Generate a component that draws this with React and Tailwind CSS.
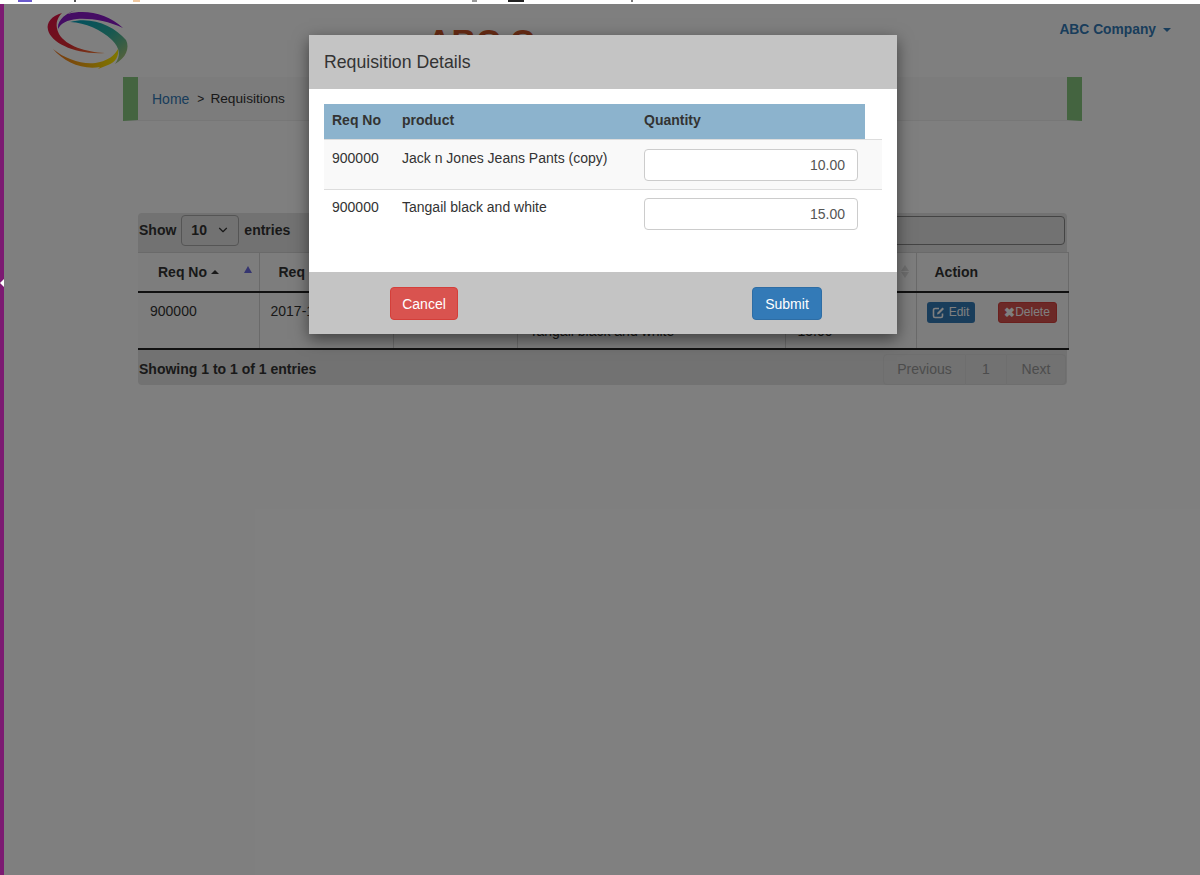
import React from 'react';
import { ChevronDown } from 'lucide-react';

const font = { fontFamily: '"Liberation Sans", Arial, sans-serif' };

// swirl logo behind the overlay
const Logo = () => (
  <svg width="84" height="60" viewBox="0 0 84 60" className="ml-[42px] mt-[6px] shrink-0">
    <defs>
      <linearGradient id="swirlRed" x1="0" y1="0" x2="1" y2="1">
        <stop offset="0" stopColor="#e0104a" />
        <stop offset="0.6" stopColor="#e02a30" />
        <stop offset="1" stopColor="#ff8a30" />
      </linearGradient>
      <linearGradient id="swirlBlue" x1="0" y1="0" x2="1" y2="1">
        <stop offset="0" stopColor="#00a0c0" />
        <stop offset="0.5" stopColor="#30b0a0" />
        <stop offset="1" stopColor="#c0c870" />
      </linearGradient>
      <linearGradient id="swirlYellow" x1="0" y1="0" x2="1" y2="0">
        <stop offset="0" stopColor="#f07020" />
        <stop offset="1" stopColor="#fff000" />
      </linearGradient>
    </defs>
    <path d="M16 3 C6 6 0 12 2 20 C5 33 30 45 59 43 C40 42 20 36 13 24 C9 16 10 9 16 3 Z" fill="url(#swirlRed)" />
    <path d="M12 19 C11 10 20 3 30 0 C25 2 23 3 22 4 C40 -1 62 4 77 18 C62 11 45 8 31 9 C21 10 15 13 12 19 Z" fill="#8a1ac8" />
    <path d="M24 12 C46 6 68 16 80 30 C84 38 80 48 69 54 C75 46 74 38 66 30 C54 19 40 13 24 12 Z" fill="url(#swirlBlue)" />
    <path d="M7 39 C20 50 40 56 54 52 C62 50 68 46 72 39 C73 46 70 52 62 55 L52 59 L54 57 C36 60 18 52 7 39 Z" fill="url(#swirlYellow)" />
  </svg>
);

const thCell = 'border-r border-[#d4d4d4] px-[19px] text-left align-middle text-sm font-bold text-[#333]';
const tdCell = 'border-r border-[#d4d4d4] px-3 pt-2 align-top text-sm text-[#333]';

const BackgroundPage = () => (
  <div className="flex h-full flex-col bg-white pl-1 pt-1">
    <div className="flex h-[73px] shrink-0 items-start">
      <Logo />
      <div className="ml-[297px] mt-5 text-[34px] font-bold leading-[34px] text-[#d0582a]">ABC Company</div>
      <div className="ml-auto mr-[29px] mt-4 flex items-center gap-[7px] text-[13.8px] font-bold text-[#337ab7]">
        ABC Company
        <span className="h-0 w-0 border-x-4 border-t-4 border-x-transparent border-t-[#337ab7]" />
      </div>
    </div>

    <div className="ml-[119px] flex h-[44px] w-[959px] shrink-0 items-center border-x-[15px] border-x-[#88c880] border-b border-b-[#eee] bg-[#f8f8f8] pl-[14px] text-sm text-[#333]">
      <span className="text-[#337ab7]">Home</span>
      <span className="ml-2 mr-[6px] text-xs">&gt;</span>
      <span className="mt-px text-[13.7px]">Requisitions</span>
    </div>

    <div className="ml-[134px] mt-[92px] w-[929px] rounded bg-[#e4e4e4]">
      <div className="flex h-[39px] items-center pb-[5px] text-sm font-bold text-[#333]">
        <span className="ml-px">Show</span>
        <div className="ml-[5px] flex h-[31px] w-[58px] items-center justify-between rounded border border-[#aaa] pl-[9px] pr-2">
          10
          <ChevronDown size={14} />
        </div>
        <span className="ml-[5px]">entries</span>
        <div className="ml-auto mr-[2px] h-[29px] w-[500px] rounded border border-[#888] bg-[#e4e4e4]" />
      </div>

      <table className="w-[930px] table-fixed border-collapse border-r border-t border-[#d4d4d4] bg-[#fafafa]">
        <colgroup>
          <col className="w-[121px]" />
          <col className="w-[134px]" />
          <col className="w-[124px]" />
          <col className="w-[268px]" />
          <col className="w-[131px]" />
          <col className="w-[152px]" />
        </colgroup>
        <thead>
          <tr className="h-[39px] border-b-2 border-[#222]">
            <th className={thCell}>
              <div className="flex items-center justify-between pl-px">
                <span className="flex items-center gap-1">
                  Req No
                  <span className="h-0 w-0 border-x-[4px] border-b-[4px] border-x-transparent border-b-[#333]" />
                </span>
                <span className="-mr-[12px] -mt-1 h-0 w-0 border-x-[4px] border-b-[7px] border-x-transparent border-b-[#6a6ae0]" />
              </div>
            </th>
            <th className={thCell}>Req Date</th>
            <th className={thCell}>Req By</th>
            <th className={thCell}>Product</th>
            <th className={thCell}>
              <div className="flex items-center justify-between">
                Quantity
                <span className="-mr-[12px] flex flex-col gap-px">
                  <span className="h-0 w-0 border-x-[4px] border-b-[6px] border-x-transparent border-b-[#dcdcdc]" />
                  <span className="h-0 w-0 border-x-[4px] border-t-[6px] border-x-transparent border-t-[#dcdcdc]" />
                </span>
              </div>
            </th>
            <th className="px-[18px] text-left text-sm font-bold text-[#333]">Action</th>
          </tr>
        </thead>
        <tbody>
          <tr className="h-[57px] border-b-2 border-[#222]">
            <td className={tdCell}>900000</td>
            <td className="border-r border-[#d4d4d4] px-[11px] pt-2 align-top text-sm text-[#333]">2017-10-10</td>
            <td className={tdCell} />
            <td className={tdCell}>
              <div>Jack n Jones Jeans Pants (copy)</div>
              <div>Tangail black and white</div>
            </td>
            <td className={tdCell}>
              <div className="h-5" />
              <div>15.00</div>
            </td>
            <td className="pl-[10px] pt-[9px] align-top">
              <div className="flex items-center justify-between pr-[11px]">
                <span className="flex h-[21px] w-[48px] items-center justify-center gap-1 rounded-[3px] bg-[#337ab7] text-xs text-white">
                  <svg width="13" height="13" viewBox="0 0 13 13" fill="none" stroke="white" strokeWidth="1.6">
                    <path d="M10.5 7.5 V10 a1.5 1.5 0 0 1 -1.5 1.5 H3 A1.5 1.5 0 0 1 1.5 10 V4 A1.5 1.5 0 0 1 3 2.5 H7" />
                    <path d="M5 8.5 L5.5 6.5 L10.5 1.5 L12 3 L7 8 Z" fill="white" stroke="none" />
                  </svg>
                  Edit
                </span>
                <span className="flex h-[21px] w-[59px] items-center justify-center rounded-[3px] border border-[#d43f3a] bg-[#d9534f] text-xs text-white">
                  <span className="text-[13px] font-bold leading-none">✖</span>
                  Delete
                </span>
              </div>
            </td>
          </tr>
        </tbody>
      </table>

      <div className="flex h-[35px] items-center justify-between text-sm font-bold text-[#333]">
        <span className="ml-px mt-1">Showing 1 to 1 of 1 entries</span>
        <div className="mr-px flex h-[31px] self-end font-normal text-[#999]">
          <span className="flex w-[83px] items-center justify-center rounded-l border border-[#dcdcdc]">Previous</span>
          <span className="flex w-[40px] items-center justify-center border-y border-[#dcdcdc]">1</span>
          <span className="flex w-[60px] items-center justify-center rounded-r border border-[#dcdcdc]">Next</span>
        </div>
      </div>
    </div>
  </div>
);

const rows = [
  { no: '900000', name: 'Jack n Jones Jeans Pants (copy)', qty: '10.00' },
  { no: '900000', name: 'Tangail black and white', qty: '15.00' },
];

const Modal = () => (
  <div className="absolute left-[309px] top-[35px] flex h-[299px] w-[588px] flex-col bg-white shadow-[0_5px_15px_rgba(0,0,0,0.5)]">
    <div className="flex h-[54px] shrink-0 items-center bg-[#c4c4c4] px-[15px] text-[17.7px] text-[#333]">Requisition Details</div>

    <div className="flex-1 px-[15px] pt-[15px] text-sm text-[#333]">
      <div className="flex h-[35px] w-[541px] items-center bg-[#8cb3cd] pb-[3px] font-bold">
        <span className="w-[70px] pl-2">Req No</span>
        <span className="w-[242px] pl-2">product</span>
        <span className="pl-2">Quantity</span>
      </div>
      {rows.map((row, i) => (
        <div
          key={row.name}
          className={`flex h-[50px] w-[558px] items-start border-t border-[#ddd] ${i === 0 ? 'bg-[#f9f9f9] pt-[9px]' : 'pt-[8px]'}`}
        >
          <span className="-mt-px w-[70px] pl-2">{row.no}</span>
          <span className="-mt-px w-[242px] pl-2">{row.name}</span>
          <div className="ml-2 flex h-[32px] w-[214px] items-center justify-end rounded border border-[#ccc] bg-white px-3 text-[#555]">
            {row.qty}
          </div>
        </div>
      ))}
    </div>

    <div className="flex h-[62px] shrink-0 items-start justify-between bg-[#c4c4c4] pl-[81px] pr-[75px] pt-[15px] text-sm text-white">
      <span className="flex h-[33px] w-[68px] items-center justify-center rounded border border-[#d43f3a] bg-[#d9534f]">Cancel</span>
      <span className="flex h-[33px] w-[70px] items-center justify-center rounded border border-[#2e6da4] bg-[#337ab7]">Submit</span>
    </div>
  </div>
);

export default function App() {
  return (
    <div className="relative h-[875px] w-[1200px] overflow-hidden" style={font}>
      <BackgroundPage />
      <div className="absolute inset-0 bg-black/50" />
      {/* sliver of the browser chrome at the very top */}
      <div className="absolute inset-x-0 top-0 flex h-1 items-start bg-white">
        <span className="ml-[18px] h-[2px] w-[14px] bg-[#6a5acd]" />
        <span className="ml-[42px] h-[2px] w-[2px] bg-[#555]" />
        <span className="ml-[57px] h-[2px] w-[7px] bg-[#f0c8a0]" />
        <span className="ml-[332px] h-[2px] w-[5px] bg-[#999]" />
        <span className="ml-[31px] h-[2px] w-[16px] bg-[#222]" />
        <span className="ml-[107px] h-[2px] w-[2px] bg-[#777]" />
      </div>
      <div className="absolute bottom-0 left-0 top-1 w-1 bg-[#7c1a72]" />
      <div className="absolute left-0 top-[279px] h-0 w-0 border-y-4 border-r-4 border-y-transparent border-r-white" />
      <Modal />
    </div>
  );
}
